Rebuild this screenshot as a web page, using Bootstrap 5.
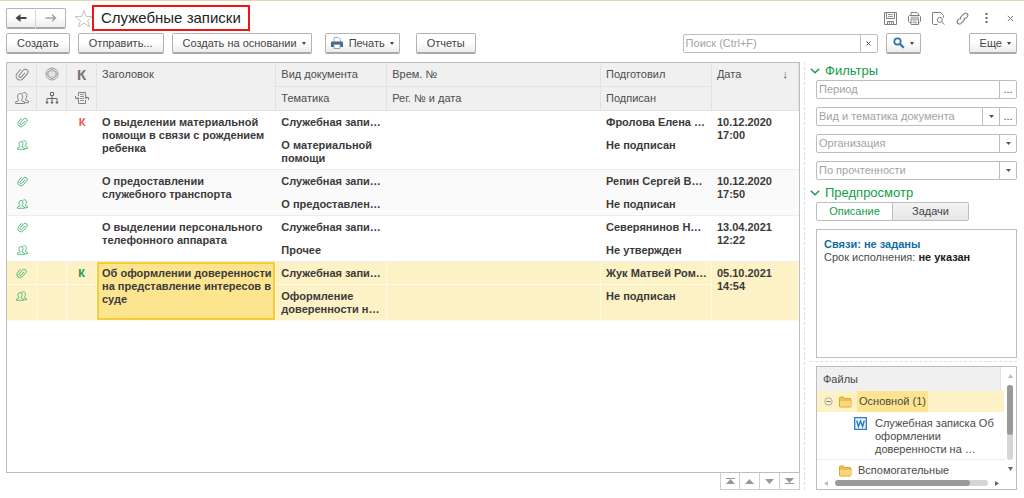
<!DOCTYPE html>
<html lang="ru">
<head>
<meta charset="utf-8">
<meta name="viewport" content="width=device-width, initial-scale=1">
<title>Служебные записки</title>
<link href="https://cdn.jsdelivr.net/npm/bootstrap@5.3.0/dist/css/bootstrap.min.css" rel="stylesheet">
<style>
  :root { --line: #bdbdbd; --soft: #e2e2e2; --green: #0f9d49; --ink: #4a4a4a; --sel: #fdf1c6; }
  body { font-family: "Liberation Sans", Arial, sans-serif; font-size: 11px; line-height: 13px; color: var(--ink); background: #fff; }
  svg { display: block; flex: none; }
  .page { border-top: 1px solid #e3d9ab; padding: 4px 7px 8px 6px; }
  .titlebar { height: 26px; }
  .page-title { font-size: 15px; line-height: 22px; color: #222; border: 2px solid #f01414; padding: 0 7px; margin: 0 0 0 -2px; font-weight: 400; }
  .commands { margin: 2px 0 8px; }
  .tool { display: inline-flex; align-items: center; justify-content: center; height: 21px; padding: 0 10px; border: 1px solid #b4b4b4; border-bottom: 2px solid #a9a9a9; border-radius: 2px; background: linear-gradient(#fff 45%, #ececec); color: #444; font-size: 11px; line-height: 13px; white-space: nowrap; }
  .tool.dropdown-toggle { padding-right: 5px; }
  .tool.dropdown-toggle::after { border-width: 3px 2px 0; border-style: solid; border-color: #444 transparent transparent; margin-left: 5px; vertical-align: 0; }
  .tool.with-icon { padding: 0 5px; }
  .after-group { margin-right: 13px; }
  .print-icon { margin-right: 6px; }
  .tool.find { padding: 0 6px; margin-left: 8px; }
  .nav-pair .tool { width: 30px; padding: 0; }
  .nav-pair .tool:first-child { border-radius: 2px 0 0 2px; border-right-color: #d5d5d5; }
  .nav-pair .tool:last-child { border-radius: 0 2px 2px 0; border-left: 0; }
  .glyph-btn { border: 0; background: none; padding: 0; color: #808080; }
  .win-tools { gap: 11px; }
  .win-tools .glyph-btn { width: 13px; height: 13px; display: flex; align-items: center; justify-content: center; }
  .field { display: flex; height: 19px; border: 1px solid var(--line); border-radius: 2px; background: #fff; }
  .field input { flex: 1 1 0; min-width: 0; border: 0; padding: 0 2px; font-size: 11px; line-height: 13px; color: #444; background: none; outline-offset: 0; }
  .field input::placeholder { color: #a3a3a3; opacity: 1; }
  .field button { flex: none; width: 17px; border: 0; border-left: 1px solid var(--line); background: none; padding: 0; color: #444; font-size: 11px; line-height: 13px; display: flex; align-items: center; justify-content: center; }
  .search-field { width: 195px; }
  .workspace { display: grid; grid-template-columns: minmax(0, 1fr) 213px; gap: 4px; }
  .list-box { border: 1px solid var(--line); }
  .records { table-layout: fixed; width: 100%; border-collapse: separate; border-spacing: 0; }
  .records th, .records td { padding: 5px 2px 5px 5px; vertical-align: top; font-size: 11px; line-height: 13px; overflow: hidden; white-space: nowrap; }
  .records th { font-weight: 400; background: #f0f0f0; border-right: 1px solid var(--soft); border-bottom: 1px solid var(--soft); color: #4d4d4d; }
  .records td { font-weight: 700; color: #3a3a3a; height: 23px; }
  .records .ico { padding: 5px 0 4px; width: 30px; }
  .records th.ico { padding: 4px 0; color: #828282; }
  .ico svg, .ico span { margin: 0 auto; }
  .records .wrap { white-space: normal; }
  .records .tail td, .records .both { border-bottom: 1px solid #ededed; }
  .records .tail td, .records .sel td { padding-bottom: 4px; }
  .records .alt td { background: #fafafa; }
  .records .sel td { background: var(--sel); border-right: 1px solid #fff9e6; border-bottom: 1px solid #fff9e6; }
  .records .sel td.current { background: #fde58f; box-shadow: inset 0 0 0 2px #f9cd30; }
  .records .tall { height: 36px; }
  .w-kind { width: 14%; } .w-num { width: 27%; } .w-date { width: 11%; } .w-ico { width: 30px; }
  .mark-k { display: block; text-align: center; font-size: 11px; }
  .mark-head { font-size: 15px; line-height: 15px; color: #757575; font-weight: 700; }
  .red-k { color: #e5564a; }
  .green-k { color: var(--green); }
  .pager button { width: 20px; height: 17px; border: 1px solid #cfcfcf; border-top: 0; border-left: 0; background: #fff; padding: 0; display: flex; align-items: center; justify-content: center; }
  .pager button:first-child { border-left: 1px solid #cfcfcf; }
  .side { border-left: 1px dashed #dedede; padding-left: 5px; }
  .side-body { padding-left: 6px; }
  .group-title { font-size: 13px; line-height: 17px; color: var(--green); font-weight: 400; margin: 0; display: flex; align-items: center; gap: 5px; }
  .group-title button { border: 0; background: none; padding: 0; }
  .filters { gap: 8px; margin: 1px 0 4px; }
  .tab-pair button { height: 19px; width: 77px; border: 1px solid var(--line); background: linear-gradient(#f4f4f4, #e6e6e6); color: #444; font-size: 11px; line-height: 13px; padding: 0; border-radius: 0 2px 2px 0; margin-left: -1px; }
  .tab-pair { margin-top: 1px; }
  .tab-pair button.active { background: #fff; color: var(--green); border-radius: 2px 0 0 2px; margin-left: 0; }
  .preview { border: 1px solid var(--line); padding: 8px 7px; min-height: 120px; }
  .preview a { color: #0f6ea3; }
  .preview strong { color: #1a1a1a; }
  .splitter { border-top: 1px dashed #dedede; margin: 3px 0 4px -6px; }
  .files { border: 1px solid var(--line); height: 124px; }
  .files-main { min-width: 0; }
  .files-view { overflow: hidden; min-height: 0; }
  .tree-head { background: #f0f0f0; height: 24px; padding: 6px; border-right: 1px solid var(--soft); margin-right: 3px; }
  .tree-row { padding: 4px 0 0 7px; display: flex; align-items: center; gap: 6px; }
  .tree-row.picked { background: var(--sel); padding-top: 0; height: 21px; }
  .picked .node-label { background: #fde58f; line-height: 21px; padding: 0 2px; margin-left: -1px; }
  .tree-row.leaf { align-items: flex-start; padding: 5px 0 3px 37px; gap: 8px; border-bottom: 1px solid #ececec; }
  .twig { width: 9px; }
  .rail { background: #d6d6d6; border-radius: 3px; }
  .thumb { background: #9a9a9a; border-radius: 3px; }
  .bar-h { height: 12px; padding: 0 5px 0 7px; gap: 7px; }
  .bar-h .rail, .bar-h .thumb { height: 6px; }
  .bar-h .thumb { width: 88%; }
  .bar-v { flex: none; width: 12px; padding: 7px 0 18px; gap: 7px; }
  .bar-v .rail, .bar-v .thumb { width: 6px; }
  .bar-v .thumb { height: 66%; }
</style>
</head>
<body>
<svg width="0" height="0" class="position-absolute" aria-hidden="true">
  <defs>
    <symbol id="clip" viewBox="0 0 14 14"><path d="M8.500 4.500V9.500a1.500 1.500 0 0 1-3 0V3.300a2.700 2.700 0 0 1 5.400 0V9.800a4 4 0 0 1-8 0V4.500" transform="rotate(40 7 7)" fill="none" stroke="currentColor" stroke-linecap="round"/></symbol>
    <symbol id="people" viewBox="0 0 14 14"><path d="M.6 12.500h8.900v-1.600L6.700 9.700V8.600C8.400 6.500 7.900 2.500 5.100 2.500S1.800 6.500 3.500 8.600v1.100L.6 10.900zM7.300 2.700C8 .9 12 .9 11.900 4.500c0 1.600-.5 2.600-1.300 3.300v1.100l2.800 1.200v1.600h-3.700" fill="none" stroke="currentColor"/></symbol>
    <symbol id="folder" viewBox="0 0 13 12"><path d="M.5 2q0-1 1-1h3l1 1.500h5.500q1 0 1 1V10q0 1-1 1H1.500q-1 0-1-1z" fill="#f1c04c" stroke="#dba52f"/><path d="M1 5h11v5.500H1z" fill="#fbd877"/></symbol>
    <symbol id="chev" viewBox="0 0 10 8"><path d="m.8 1.800 4.200 4 4.200-4" fill="none" stroke="#0f9d49" stroke-width="1.400"/></symbol>
    <symbol id="drop" viewBox="0 0 5 3"><path d="M0 0h5L2.500 3z" fill="#555"/></symbol>
  </defs>
</svg>
<div class="page min-vh-100 d-flex flex-column">
  <header class="titlebar d-flex align-items-center">
    <div class="nav-pair d-flex" role="group" aria-label="Навигация">
      <button type="button" class="tool" aria-label="Назад"><svg width="12" height="8" viewBox="0 0 12 8"><path d="M11.500 4H3" fill="none" stroke="#444" stroke-width="2"/><path d="M5.500 0v8L.5 4z" fill="#444"/></svg></button>
      <button type="button" class="tool" aria-label="Вперед"><svg width="12" height="8" viewBox="0 0 12 8"><path d="M.5 4H10M7 .8 10.500 4 7 7.200" fill="none" stroke="#a2a2a2" stroke-width="1.500"/></svg></button>
    </div>
    <button type="button" class="glyph-btn ms-2" aria-label="В избранное"><svg width="20" height="19" viewBox="0 0 20 19"><path d="m10 1.500 2.300 6h6.500l-5.200 4 2 6.300L10 14l-5.600 3.800 2-6.300-5.200-4h6.500z" fill="none" stroke="#c3c3c3"/></svg></button>
    <h1 class="page-title">Служебные записки</h1>
    <div class="win-tools ms-auto d-flex align-items-center">
      <button type="button" class="glyph-btn" aria-label="Сохранить"><svg width="13" height="13" viewBox="0 0 13 13" fill="none" stroke="currentColor"><path d="M.5.5h12v12h-12zM2.500.5v6h8v-6M3.500 12V9.500h6V12"/><path d="M4 2.500h5M4 4.500h5M5.500 10v2M7.500 10v2" stroke-width=".8"/></svg></button>
      <button type="button" class="glyph-btn" aria-label="Печать"><svg width="13" height="13" viewBox="0 0 13 13" fill="none" stroke="currentColor"><path d="M3 3.500v-3h6l1.500 1.500v1.500M3 10.500H1.500l-1-1v-5l1-1h10l1 1v5l-1 1h-1M3 7h7.500v5.500H3z"/><path d="M4.500 9h4.500M4.500 10.800h4.500M2.500 5.200h8.500" stroke-width=".8"/></svg></button>
      <button type="button" class="glyph-btn" aria-label="Просмотр"><svg width="13" height="13" viewBox="0 0 13 13" fill="none" stroke="currentColor"><path d="M5.500 12.500h-4l-1-1V.5h8l3 3v2"/><circle cx="7.800" cy="7.800" r="2.500"/><path d="m9.600 9.700 2.800 3"/></svg></button>
      <button type="button" class="glyph-btn" aria-label="Ссылка"><svg width="13" height="13" viewBox="0 0 13 13" fill="none" stroke="currentColor" stroke-width="1.100"><path d="M5.200 7.400C4 6.200 4.500 5.200 5.300 4.400L8 1.700c2.100-1.900 5.100 1 3.200 3.100L9.400 6.600M7.800 5.600c1.200 1.200.7 2.200-.1 3L5 11.300c-2.100 1.900-5.100-1-3.200-3.100l1.800-1.800"/></svg></button>
      <button type="button" class="glyph-btn" aria-label="Меню"><svg width="5" height="12" viewBox="0 0 5 12"><path d="M1.500 1h2v2h-2zM1.500 5h2v2h-2zM1.500 9h2v2h-2z" fill="#666"/></svg></button>
      <button type="button" class="glyph-btn" aria-label="Закрыть"><svg width="7" height="7" viewBox="0 0 7 7"><path d="m.8.8 5.400 5.400M6.200.8.8 6.200" stroke="#777"/></svg></button>
    </div>
  </header>

  <div class="commands d-flex align-items-center">
    <button type="button" class="tool me-2">Создать</button>
    <button type="button" class="tool me-2">Отправить...</button>
    <button type="button" class="tool dropdown-toggle after-group">Создать на основании</button>
    <button type="button" class="tool with-icon dropdown-toggle me-3"><svg class="print-icon" width="12" height="12" viewBox="0 0 12 12"><path d="M3 5V.5h4.500L9.500 2.500V5" fill="#fff" stroke="#9db2c4"/><path d="M0 5.500q0-1 1-1h10q1 0 1 1V10H0z" fill="#446c90"/><path d="M3 7.500h6v4H3z" fill="#fff" stroke="#8fa5b8"/></svg>Печать</button>
    <button type="button" class="tool">Отчеты</button>
    <div class="field search-field ms-auto"><input type="text" aria-label="Поиск" placeholder="Поиск (Ctrl+F)"><button type="button" aria-label="Очистить"><svg width="5" height="5" viewBox="0 0 5 5"><path d="m.5.5 4 4M4.500.5l-4 4" stroke="#555"/></svg></button></div>
    <button type="button" class="tool find dropdown-toggle" aria-label="Найти"><svg width="12" height="12" viewBox="0 0 12 12"><circle cx="4.500" cy="4.500" r="3.200" fill="none" stroke="#2a74ad" stroke-width="1.700"/><path d="m7 7 3.800 3.800" stroke="#2a74ad" stroke-width="2.200"/></svg></button>
    <button type="button" class="tool dropdown-toggle ms-5">Еще</button>
  </div>

  <main class="workspace flex-grow-1">
    <section class="d-flex flex-column">
      <div class="list-box flex-grow-1">
        <table class="records">
          <colgroup><col class="w-ico"><col class="w-ico"><col class="w-ico"><col><col class="w-kind"><col class="w-num"><col class="w-kind"><col class="w-date"></colgroup>
          <thead>
            <tr>
              <th class="ico" aria-label="Вложения"><svg width="14" height="14"><use href="#clip"/></svg></th>
              <th class="ico" aria-label="Состояние"><svg width="14" height="14" viewBox="0 0 14 14" fill="none" stroke="#999"><circle cx="7" cy="7" r="6"/><circle cx="7" cy="7" r="4.300" fill="#d2d2d2"/><path d="M4 6h6M4 8h6" stroke="#f4f4f4"/></svg></th>
              <th class="ico"><span class="mark-k mark-head">К</span></th>
              <th rowspan="2">Заголовок</th><th>Вид документа</th><th>Врем. №</th><th>Подготовил</th>
              <th rowspan="2"><div class="d-flex justify-content-between pe-2">Дата <span>↓</span></div></th>
            </tr>
            <tr>
              <th class="ico" aria-label="Участники"><svg width="14" height="14"><use href="#people"/></svg></th>
              <th class="ico" aria-label="Процесс"><svg width="14" height="14" viewBox="0 0 14 14" fill="none" stroke="#666"><path d="M5.500 1.500h3v3h-3zM7 4.500v6M2 10.500v-3h10v3"/><path d="M.8 10.500h2.400v2H.8zM5.800 10.500h2.400v2H5.800zM10.800 10.500h2.400v2h-2.400z" fill="#666" stroke="none"/></svg></th>
              <th class="ico" aria-label="Обработка"><svg width="14" height="14" viewBox="0 0 14 14" fill="none" stroke="#808080"><path d="M3.500 5V1.500h7V5M3.500 9v3.500h7V9M.5 5v2.500H3M13.500 9V6.500H11"/><path d="M5 3.500h4M5 5.500h4M5 7.500h4M5 9.500h4" stroke-width=".8"/><path d="M2.500 5.500v4l2-2zM11.500 4.500v4l-2-2z" fill="#808080" stroke="none"/></svg></th>
              <th>Тематика</th><th>Рег. № и дата</th><th>Подписан</th>
            </tr>
          </thead>
          <tbody>
            <tr><td class="ico clip-g"></td><td></td><td class="ico"><span class="mark-k red-k">К</span></td><td rowspan="2" class="wrap both">О выделении материальной помощи в связи с рождением ребенка</td><td>Служебная запи…</td><td></td><td>Фролова Елена …</td><td rowspan="2" class="wrap both">10.12.2020 17:00</td></tr>
            <tr class="tail"><td class="ico people-g tall"></td><td></td><td></td><td class="wrap">О материальной помощи</td><td></td><td>Не подписан</td></tr>
            <tr class="alt"><td class="ico clip-g"></td><td></td><td></td><td rowspan="2" class="wrap both">О предоставлении<br>служебного транспорта</td><td>Служебная запи…</td><td></td><td>Репин Сергей В…</td><td rowspan="2" class="wrap both">10.12.2020 17:50</td></tr>
            <tr class="alt tail"><td class="ico people-g"></td><td></td><td></td><td>О предоставлен…</td><td></td><td>Не подписан</td></tr>
            <tr><td class="ico clip-g"></td><td></td><td></td><td rowspan="2" class="wrap both">О выделении персонального телефонного аппарата</td><td>Служебная запи…</td><td></td><td>Северянинов Н…</td><td rowspan="2" class="wrap both">13.04.2021 12:22</td></tr>
            <tr class="tail"><td class="ico people-g"></td><td></td><td></td><td>Прочее</td><td></td><td>Не утвержден</td></tr>
            <tr class="sel"><td class="ico clip-g"></td><td></td><td class="ico"><span class="mark-k green-k">К</span></td><td rowspan="2" class="wrap current">Об оформлении доверенности на представление интересов в суде</td><td>Служебная запи…</td><td></td><td>Жук Матвей Ром…</td><td rowspan="2" class="wrap">05.10.2021 14:54</td></tr>
            <tr class="sel"><td class="ico people-g tall"></td><td></td><td></td><td class="wrap">Оформление доверенности н…</td><td></td><td>Не подписан</td></tr>
          </tbody>
        </table>
      </div>
      <div class="pager d-flex justify-content-end">
        <button type="button" aria-label="В начало"><svg width="9" height="6" viewBox="0 0 9 6"><path d="M0 0h9v1H0zM4.500 1 9 6H0z" fill="#999"/></svg></button>
        <button type="button" aria-label="Вверх"><svg width="9" height="5" viewBox="0 0 9 5"><path d="M4.500 0 9 5H0z" fill="#999"/></svg></button>
        <button type="button" aria-label="Вниз"><svg width="9" height="5" viewBox="0 0 9 5"><path d="M4.500 5 9 0H0z" fill="#999"/></svg></button>
        <button type="button" aria-label="В конец"><svg width="9" height="6" viewBox="0 0 9 6"><path d="M0 5h9v1H0zM4.500 5 9 0H0z" fill="#999"/></svg></button>
      </div>
    </section>

    <aside class="side d-flex flex-column">
      <h2 class="group-title"><button type="button" aria-label="Свернуть фильтры"><svg width="10" height="8"><use href="#chev"/></svg></button>Фильтры</h2>
      <div class="side-body d-grid filters">
        <div class="field"><input type="text" aria-label="Период" placeholder="Период"><button type="button" aria-label="Выбрать период">...</button></div>
        <div class="field"><input type="text" aria-label="Вид и тематика документа" placeholder="Вид и тематика документа"><button type="button" aria-label="Список"><svg width="5" height="3"><use href="#drop"/></svg></button><button type="button" aria-label="Выбрать вид">...</button></div>
        <div class="field"><input type="text" aria-label="Организация" placeholder="Организация"><button type="button" aria-label="Список организаций"><svg width="5" height="3"><use href="#drop"/></svg></button></div>
        <div class="field"><input type="text" aria-label="По прочтенности" placeholder="По прочтенности"><button type="button" aria-label="Список состояний"><svg width="5" height="3"><use href="#drop"/></svg></button></div>
      </div>
      <h2 class="group-title"><button type="button" aria-label="Свернуть предпросмотр"><svg width="10" height="8"><use href="#chev"/></svg></button>Предпросмотр</h2>
      <div class="side-body d-flex flex-column flex-grow-1">
        <div class="tab-pair d-flex mb-2" role="tablist"><button type="button" role="tab" aria-selected="true" class="active">Описание</button><button type="button" role="tab" aria-selected="false">Задачи</button></div>
        <div class="preview flex-grow-1"><a href="#" class="fw-bold text-decoration-none">Связи: не заданы</a><br>Срок исполнения: <strong>не указан</strong></div>
        <div class="splitter"></div>
        <div class="files d-flex">
          <div class="files-main flex-grow-1 d-flex flex-column">
            <div class="files-view flex-grow-1">
              <div class="tree-head">Файлы</div>
              <div class="tree-row picked"><svg width="9" height="9" viewBox="0 0 9 9" fill="none" stroke="#aaa"><circle cx="4.500" cy="4.500" r="3.700"/><path d="M2.500 4.500h4" stroke="#777"/></svg><svg width="13" height="12"><use href="#folder"/></svg><span class="node-label">Основной (1)</span></div>
              <div class="tree-row leaf"><svg width="13" height="13" viewBox="0 0 13 13" fill="none" stroke="#2b7cc4"><path d="M.7.7h11.600v11.600H.7z" fill="#eaf4fc" stroke-width="1.300"/><path d="m2.700 3.500 1.700 6L6.500 4l2.100 5.500 1.700-6" stroke-width="1.400"/></svg><span>Служебная записка Об оформлении доверенности на …</span></div>
              <div class="tree-row"><span class="twig"></span><svg width="13" height="12"><use href="#folder"/></svg><span>Вспомогательные</span></div>
            </div>
            <div class="bar-h d-flex align-items-center"><svg width="4" height="5" viewBox="0 0 4 5"><path d="M4 0v5L0 2.500z" fill="#bbb"/></svg><div class="rail flex-grow-1"><div class="thumb"></div></div><svg width="4" height="5" viewBox="0 0 4 5"><path d="M0 0v5l4-2.500z" fill="#666"/></svg></div>
          </div>
          <div class="bar-v d-flex flex-column align-items-center"><svg width="5" height="4" viewBox="0 0 5 4"><path d="M0 4h5L2.500 0z" fill="#bbb"/></svg><div class="rail flex-grow-1"><div class="thumb"></div></div><svg width="5" height="4" viewBox="0 0 5 4"><path d="M0 0h5L2.500 4z" fill="#666"/></svg></div>
        </div>
      </div>
    </aside>
  </main>
</div>
<script>
  // Status icons shared by every record
  const icon = id => `<svg width="11" height="12" color="#35b06c"><use href="#${id}"/></svg>`;
  document.querySelectorAll('.clip-g').forEach(c => c.innerHTML = icon('clip'));
  document.querySelectorAll('.people-g').forEach(c => c.innerHTML = icon('people'));
</script>
<script src="https://cdn.jsdelivr.net/npm/bootstrap@5.3.0/dist/js/bootstrap.bundle.min.js"></script>
</body>
</html>
